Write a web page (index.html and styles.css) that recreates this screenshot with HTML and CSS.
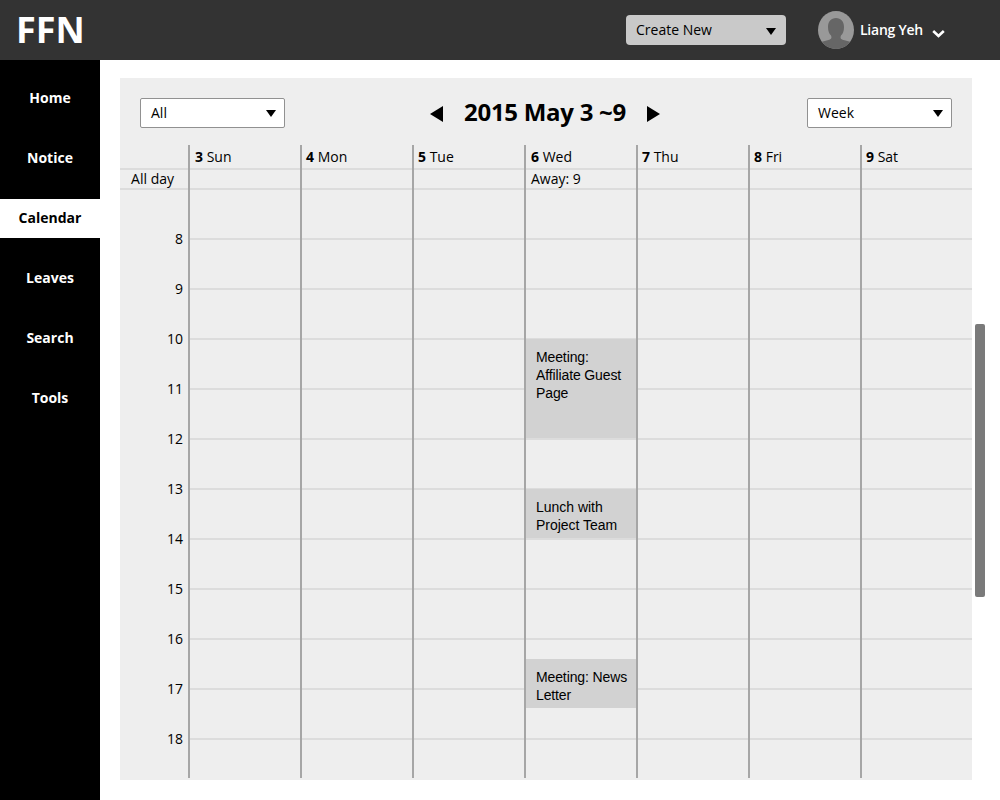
FILE: index.html
```html
<!DOCTYPE html>
<html lang="en">
<head>
<meta charset="utf-8">
<title>FFN Calendar</title>
<link rel="stylesheet" href="styles.css">
</head>
<body>
<header class="topbar">
  <div class="logo">FFN</div>
  <div class="create"><span>Create New</span><svg class="caret" width="10" height="7" viewBox="0 0 10 7"><path d="M0 0H10L5 7Z"/></svg></div>
  <div class="user">
    <svg class="avatar" width="36" height="38" viewBox="0 0 36 38">
      <defs><clipPath id="face"><ellipse cx="18" cy="19" rx="18" ry="19"/></clipPath></defs>
      <g clip-path="url(#face)">
        <rect width="36" height="38" fill="#999"/>
        <path d="M18 7C13 7 10 10.500 10 16C10 20 11 22.500 13 24.500C14.200 27 13 28.200 10.500 29L3 31V38H33V31L25.500 29C23 28.200 21.800 27 23 24.500C25 22.500 26 20 26 16C26 10.500 23 7 18 7Z" fill="#666"/>
      </g>
    </svg>
    <span class="username">Liang Yeh</span>
    <svg class="chevron" width="13" height="10" viewBox="0 0 13 10"><path d="M1.200 2L6.500 7L11.800 2" fill="none" stroke="#fff" stroke-width="2.600"/></svg>
  </div>
</header>
<div class="body">
  <nav class="sidebar">
    <a class="nav-item">Home</a>
    <a class="nav-item">Notice</a>
    <a class="nav-item active">Calendar</a>
    <a class="nav-item">Leaves</a>
    <a class="nav-item">Search</a>
    <a class="nav-item">Tools</a>
  </nav>
  <main class="panel">
    <div class="toolbar">
      <div class="select"><span>All</span><svg class="caret" width="10" height="7" viewBox="0 0 10 7"><path d="M0 0H10L5 7Z"/></svg></div>
      <div class="range">
        <svg width="13" height="16" viewBox="0 0 13 16"><path d="M13 0V16L0 8Z"/></svg>
        <h1 class="title">2015 May 3 ~9</h1>
        <svg width="13" height="16" viewBox="0 0 13 16"><path d="M0 0V16L13 8Z"/></svg>
      </div>
      <div class="select"><span>Week</span><svg class="caret" width="10" height="7" viewBox="0 0 10 7"><path d="M0 0H10L5 7Z"/></svg></div>
    </div>
    <div class="week">
      <div class="times">
        <div class="head"></div>
        <div class="allday">All day</div>
        <div class="hour">8</div><div class="hour">9</div><div class="hour">10</div><div class="hour">11</div><div class="hour">12</div><div class="hour">13</div><div class="hour">14</div><div class="hour">15</div><div class="hour">16</div><div class="hour">17</div><div class="hour">18</div>
      </div>
      <div class="day first"><div class="head"><b>3</b> Sun</div><div class="allday"></div><div class="slots"></div></div>
      <div class="day"><div class="head"><b>4</b> Mon</div><div class="allday"></div><div class="slots"></div></div>
      <div class="day"><div class="head"><b>5</b> Tue</div><div class="allday"></div><div class="slots"></div></div>
      <div class="day today"><div class="head"><b>6</b> Wed</div><div class="allday">Away: 9</div>
        <div class="slots">
          <div class="event affiliate">Meeting:<br>Affiliate Guest<br>Page</div>
          <div class="event lunch">Lunch with<br>Project Team</div>
          <div class="event news">Meeting: News<br>Letter</div>
        </div>
      </div>
      <div class="day"><div class="head"><b>7</b> Thu</div><div class="allday"></div><div class="slots"></div></div>
      <div class="day"><div class="head"><b>8</b> Fri</div><div class="allday"></div><div class="slots"></div></div>
      <div class="day"><div class="head"><b>9</b> Sat</div><div class="allday"></div><div class="slots"></div></div>
    </div>
  </main>
  <div class="scrollbar"></div>
</div>
</body>
</html>
```
FILE: styles.css
```css
* { box-sizing: border-box; }
body {
  margin: 0;
  width: 1000px;
  height: 800px;
  overflow: hidden;
  background: #fff;
  color: #000;
  font: 14px/20px "Open Sans", sans-serif;
}
svg { display: block; flex: none; }
.topbar {
  display: flex;
  align-items: center;
  height: 60px;
  padding: 0 55px 0 16px;
  background: #333;
}
.logo {
  margin-right: auto;
  color: #fff;
  font-size: 36px;
  font-weight: 700;
  line-height: 60px;
}
.create {
  display: flex;
  align-items: center;
  justify-content: space-between;
  width: 160px;
  height: 30px;
  padding: 0 10px;
  border-radius: 4px;
  background: #c9c9c9;
}
.create .caret { margin-top: 3px; }
.user {
  display: flex;
  align-items: center;
  margin-left: 32px;
}
.username {
  width: 72px;
  margin-left: 6px;
  color: #fff;
  font-weight: 600;
  letter-spacing: -0.25px;
  white-space: nowrap;
}
.chevron { margin-top: 8px; }
.body { display: flex; height: 740px; }
.sidebar {
  display: flex;
  flex-direction: column;
  gap: 21px;
  width: 100px;
  padding-top: 19px;
  background: #000;
}
.nav-item {
  height: 39px;
  color: #fff;
  font-weight: 700;
  line-height: 37px;
  text-align: center;
}
.nav-item.active { background: #fff; color: #000; }
.panel {
  width: 852px;
  height: 702px;
  margin: 18px 0 0 20px;
  background: #eee;
}
.toolbar {
  display: flex;
  justify-content: space-between;
  height: 67px;
  padding: 20px 20px 0;
}
.select {
  display: flex;
  align-items: center;
  justify-content: space-between;
  width: 145px;
  height: 30px;
  padding: 0 8px 0 10px;
  border: 1px solid #919191;
  border-radius: 2px;
  background: #fff;
}
.range {
  display: flex;
  align-items: center;
  justify-content: space-between;
  width: 230px;
  height: 31px;
  margin-right: 2px;
}
.title {
  margin: 0;
  padding-bottom: 4px;
  font-size: 24px;
  letter-spacing: -0.28px;
  line-height: 30px;
  white-space: nowrap;
}
.week { display: flex; height: 633px; }
.times { width: 68px; text-align: right; }
.head, .allday { border-bottom: 2px solid #dcdcdc; white-space: nowrap; }
.head { height: 25px; line-height: 24px; }
.allday { height: 20px; line-height: 18px; }
.times .allday { padding-right: 14px; }
.hour { height: 50px; padding-right: 5px; line-height: 98px; }
.day { width: 112px; border-left: 2px solid #a6a6a6; }
.day .head { padding-left: 4px; }
.day .allday, .first .head, .today .head { padding-left: 5px; }
.slots {
  position: relative;
  height: 588px;
  background: repeating-linear-gradient(#eee 0 48px, #dcdcdc 48px 50px);
}
.event {
  position: absolute;
  left: 0;
  width: 110px;
  padding: 9px 0 0 10px;
  background: #d2d2d2;
  font: 14px/18px "Liberation Sans", sans-serif;
  letter-spacing: -0.12px;
  white-space: nowrap;
}
.affiliate { top: 149px; height: 99px; }
.lunch { top: 299px; height: 49px; letter-spacing: -0.02px; }
.news { top: 469px; height: 49px; }
.scrollbar {
  width: 10px;
  height: 273px;
  margin: 264px 0 0 3px;
  border-radius: 2px;
  background: #7a7a7a;
}
```
